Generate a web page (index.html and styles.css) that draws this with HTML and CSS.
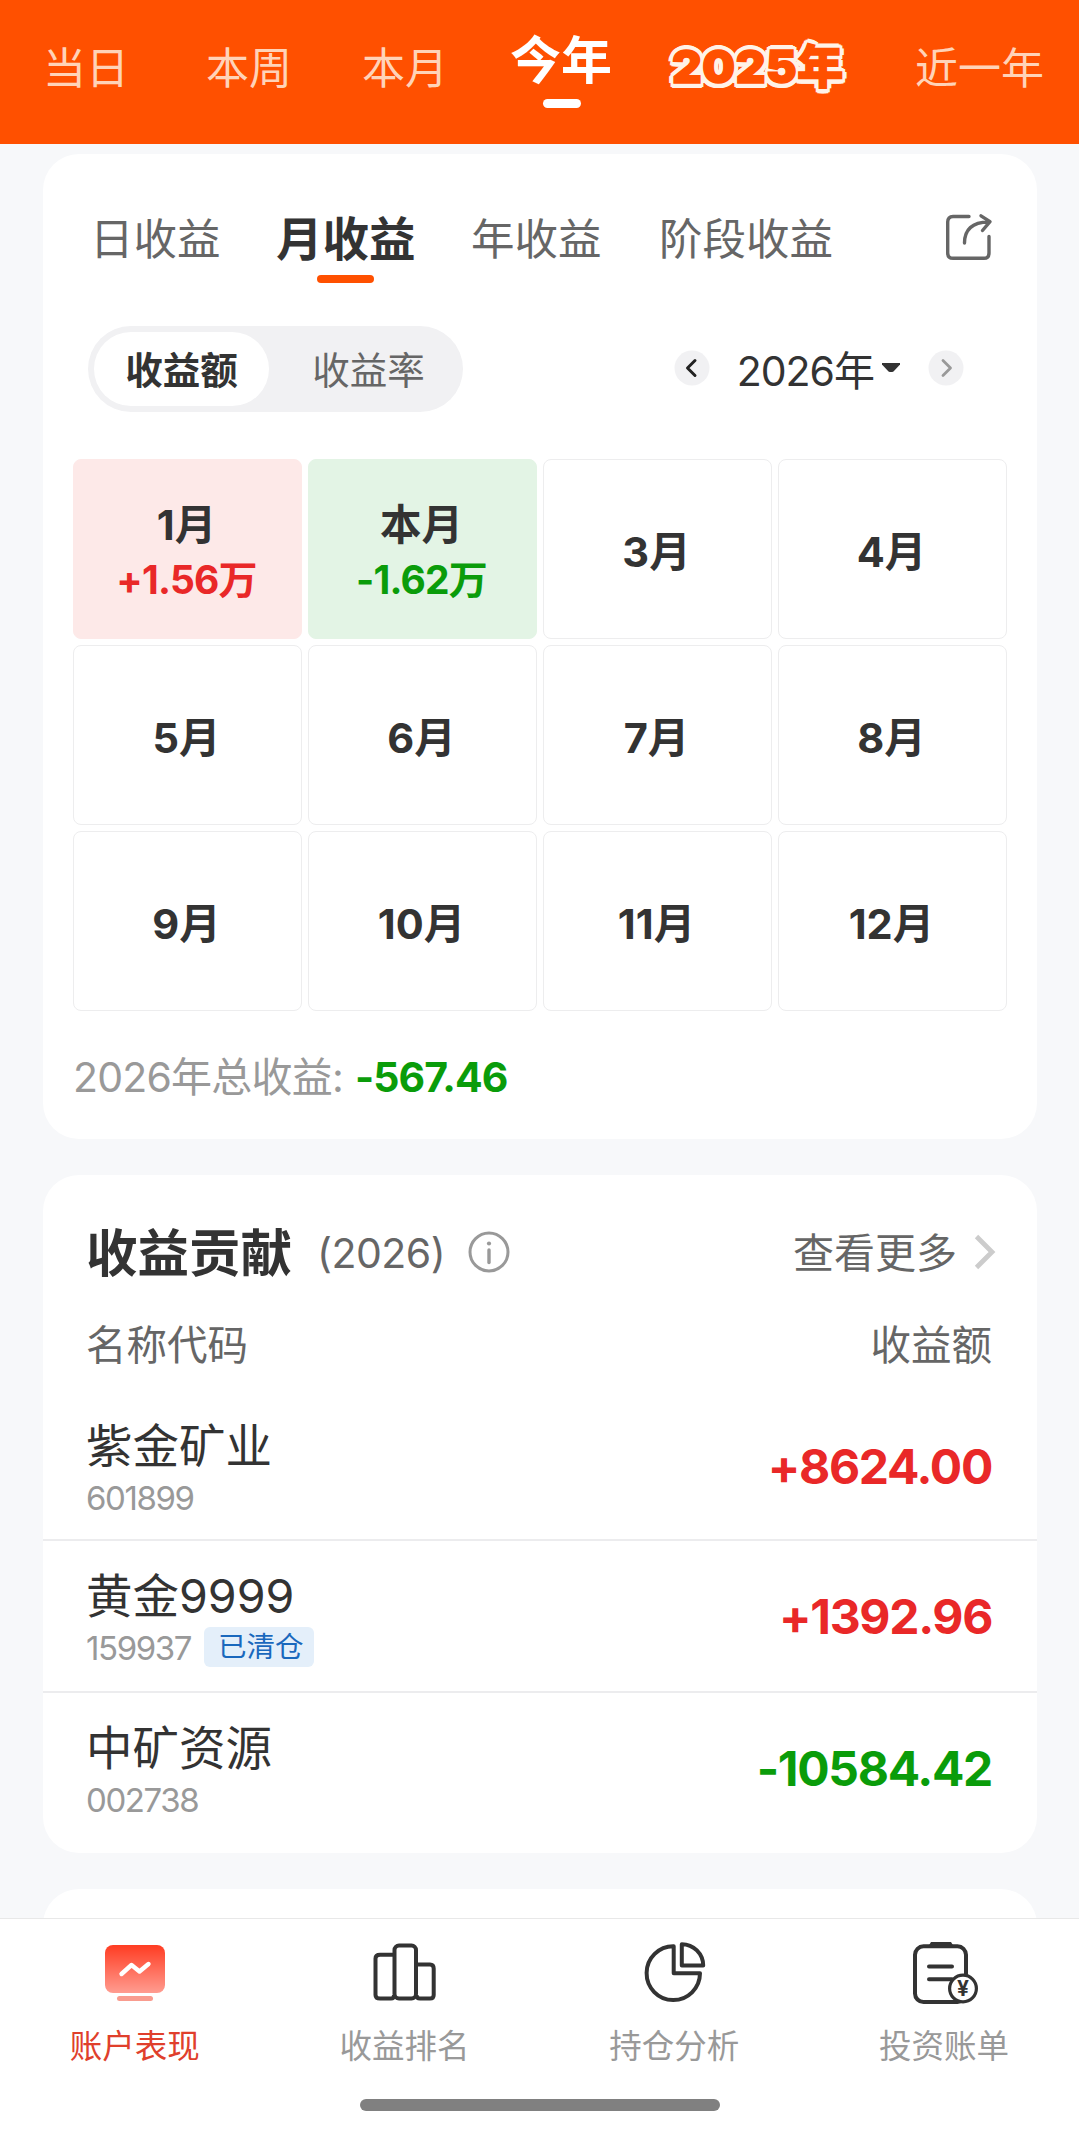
FILE: index.html
```html
<!DOCTYPE html>
<html lang="zh-CN">
<head>
    <meta charset="UTF-8">
    <meta name="viewport" content="width=device-width, initial-scale=1.0">
    <title>账户表现</title>
    <link rel="stylesheet" href="styles.css">
</head>
<body>
    <header class="period-bar">
        <span class="period">当日</span>
        <span class="period">本周</span>
        <span class="period">本月</span>
        <span class="period active">今年</span>
        <span class="period year-badge">2025年</span>
        <span class="period">近一年</span>
    </header>

    <main class="content">
        <section class="card calendar-card">
            <div class="tabs">
                <span class="tab">日收益</span>
                <span class="tab active">月收益</span>
                <span class="tab">年收益</span>
                <span class="tab">阶段收益</span>
                <svg class="share-icon" width="48" height="48" viewBox="0 0 48 48" fill="none" stroke="#666" stroke-width="3.4" stroke-linecap="round" stroke-linejoin="round">
                    <path d="M24 3.500H8Q2.700 3.500 2.700 9V40Q2.700 45.300 8 45.300H39Q44 45.300 44 40V23.500"/>
                    <path d="M19.500 30C19.500 17 27 9 43.500 9M36 2.800L45 8.700L37.500 17.500"/>
                </svg>
            </div>

            <div class="toolbar">
                <div class="switch">
                    <span class="switch-item active">收益额</span>
                    <span class="switch-item">收益率</span>
                </div>
                <div class="year-picker">
                    <svg width="36" height="36" viewBox="0 0 36 36" fill="none">
                        <circle cx="18" cy="18" r="17.500" fill="#f1f1f3"/>
                        <path d="M21 10.500L13.500 18L21 25.500" stroke="#222" stroke-width="3" stroke-linecap="round" stroke-linejoin="round"/>
                    </svg>
                    <span class="year">2026年</span>
                    <svg class="caret" width="20" height="10" viewBox="0 0 20 10">
                        <path d="M1 0H19V1.500L12.500 8.500Q10 9.500 7.500 8.500L1 1.500Z" fill="#333"/>
                    </svg>
                    <svg width="36" height="36" viewBox="0 0 36 36" fill="none">
                        <circle cx="18" cy="18" r="17.500" fill="#f1f1f3"/>
                        <path d="M15 10.500L22.500 18L15 25.500" stroke="#999" stroke-width="2.800" stroke-linecap="round" stroke-linejoin="round"/>
                    </svg>
                </div>
            </div>

            <div class="months">
                <div class="month up"><span>1月</span><span class="value">+1.56万</span></div>
                <div class="month down"><span>本月</span><span class="value">-1.62万</span></div>
                <div class="month">3月</div>
                <div class="month">4月</div>
                <div class="month">5月</div>
                <div class="month">6月</div>
                <div class="month">7月</div>
                <div class="month">8月</div>
                <div class="month">9月</div>
                <div class="month">10月</div>
                <div class="month">11月</div>
                <div class="month">12月</div>
            </div>

            <p class="total"><span class="total-label">2026年总收益:</span><b>-567.46</b></p>
        </section>

        <section class="card contribution">
            <div class="card-head">
                <h2>收益贡献</h2>
                <span class="head-year">(2026)</span>
                <svg width="44" height="44" viewBox="0 0 44 44" fill="none" stroke="#999" stroke-width="3">
                    <circle cx="22" cy="22" r="19"/>
                    <path d="M22 20V32.500" stroke-width="3.400" stroke-linecap="round"/>
                    <circle cx="22" cy="13.500" r="2.100" fill="#999" stroke="none"/>
                </svg>
                <span class="more">查看更多</span>
                <svg width="24" height="36" viewBox="0 0 24 36" fill="none" stroke="#ccc" stroke-width="4.800">
                    <path d="M3.500 2.500L19 18L3.500 33.500"/>
                </svg>
            </div>
            <div class="list-head"><span>名称代码</span><span>收益额</span></div>
            <div class="row">
                <div>
                    <div class="name">紫金矿业</div>
                    <div class="code">601899</div>
                </div>
                <span class="amount red">+8624.00</span>
            </div>
            <div class="row">
                <div>
                    <div class="name">黄金9999</div>
                    <div class="code">159937<span class="tag">已清仓</span></div>
                </div>
                <span class="amount red">+1392.96</span>
            </div>
            <div class="row">
                <div>
                    <div class="name">中矿资源</div>
                    <div class="code">002738</div>
                </div>
                <span class="amount green">-10584.42</span>
            </div>
        </section>

        <section class="card next-card"></section>
    </main>

    <footer class="bottom-bar">
        <nav class="nav">
            <div class="nav-item active">
                <svg width="72" height="72" viewBox="0 0 72 72" fill="none">
                    <defs>
                        <linearGradient id="screen" x1="0" y1="0" x2="0" y2="1">
                            <stop offset="0" stop-color="#ff3c22"/>
                            <stop offset="1" stop-color="#ff9c90"/>
                        </linearGradient>
                    </defs>
                    <rect x="6" y="8" width="60" height="48" rx="8" fill="url(#screen)"/>
                    <path d="M22.500 37L32.500 28L40.500 34.500L49.500 27" stroke="#fff" stroke-width="4.400" stroke-linecap="round" stroke-linejoin="round"/>
                    <rect x="18" y="59" width="36" height="5" rx="2.500" fill="#f99c8f"/>
                </svg>
                <span>账户表现</span>
            </div>
            <div class="nav-item">
                <svg width="72" height="72" viewBox="0 0 72 72" fill="none" stroke="#333" stroke-width="4">
                    <path d="M25 17.800H11Q6.500 17.800 6.500 21.500V58Q6.500 61.500 11 61.500H22Q25 61.500 25 58"/>
                    <rect x="25.500" y="8.500" width="21.500" height="53" rx="4.500"/>
                    <path d="M47.500 27.500H61Q64.700 27.500 64.700 31.500V58Q64.700 61.500 61 61.500H51Q47.500 61.500 47.500 58"/>
                </svg>
                <span>收益排名</span>
            </div>
            <div class="nav-item">
                <svg width="72" height="72" viewBox="0 0 72 72" fill="none" stroke="#333" stroke-width="4" stroke-linejoin="round">
                    <path d="M35.700 9.300A26.700 26.900 0 1 0 62 36.300H35.700Z"/>
                    <path d="M43.800 7.200V28.500H65.200A21.400 21.400 0 0 0 43.800 7.200Z"/>
                </svg>
                <span>持仓分析</span>
            </div>
            <div class="nav-item">
                <svg width="72" height="72" viewBox="0 0 72 72" fill="none" stroke="#333" stroke-width="4">
                    <rect x="7" y="9.300" width="51" height="55.700" rx="8.500"/>
                    <path d="M20.500 9L23 5H43L45.500 9Z" fill="#333" stroke="none"/>
                    <path d="M21 29.500H44M21 42.200H44" stroke-linecap="round"/>
                    <circle cx="55" cy="51.500" r="13.400" fill="#fff" stroke-width="3.200"/>
                    <text class="yen" x="55" y="59" text-anchor="middle">¥</text>
                </svg>
                <span>投资账单</span>
            </div>
        </nav>
        <div class="home-indicator"></div>
    </footer>
</body>
</html>
```
FILE: styles.css
```css
* {
    margin: 0;
    padding: 0;
    box-sizing: border-box;
}

body {
    height: 2131px;
    display: flex;
    flex-direction: column;
    overflow: hidden;
    background: #f7f8fa;
    color: #333;
    font-family: Inter, "Noto Sans CJK SC", sans-serif;
}

svg {
    display: block;
    flex: none;
}

/* top period bar */
.period-bar {
    flex: none;
    height: 144px;
    padding-left: 43px;
    display: grid;
    grid-template-columns: 163px 156px 148px 162px 243px auto;
    background: #ff5000;
}

.period {
    padding-top: 39px;
    font-size: 43px;
    line-height: 58px;
    color: #ffd3b8;
    white-space: nowrap;
}

.period.active {
    padding-top: 32px;
    font-size: 51px;
    font-weight: 700;
    color: #fff;
}

.period.active::after {
    content: "";
    display: block;
    width: 38px;
    height: 9px;
    margin: 9px 0 0 33px;
    border-radius: 5px;
    background: #fff;
}

.period.year-badge {
    padding-top: 37px;
    font-size: 46px;
    font-weight: 900;
    letter-spacing: 0.6px;
    color: #ff5000;
    -webkit-text-stroke: 1.5px #ff5000;
    text-shadow: 5px 0 #fff3e8, -5px 0 #fff3e8, 0 5px #fff3e8, 0 -5px #fff3e8,
        3.5px 3.5px #fff3e8, -3.5px 3.5px #fff3e8, 3.5px -3.5px #fff3e8, -3.5px -3.5px #fff3e8,
        2px 4.5px #fff3e8, -2px 4.5px #fff3e8, 2px -4.5px #fff3e8, -2px -4.5px #fff3e8;
}

.content {
    flex: 1;
    min-height: 0;
    overflow: hidden;
    padding: 10px 42px 0 43px;
}

.card {
    margin-bottom: 36px;
    border-radius: 36px;
    background: #fff;
}

.calendar-card {
    height: 985px;
    padding: 55px 30px 0;
}

.tabs {
    display: grid;
    grid-template-columns: 186px 195px 188px auto 62px;
    padding-left: 17px;
    height: 117px;
}

.tab {
    font-size: 43.5px;
    line-height: 60px;
    color: #666;
}

.tab.active {
    font-size: 46.5px;
    font-weight: 700;
    color: #333;
}

.tab.active::after {
    content: "";
    display: block;
    width: 57px;
    height: 8px;
    margin: 6px 0 0 41px;
    border-radius: 4px;
    background: #ff5000;
}

.share-icon {
    margin-top: 4px;
}

.toolbar {
    display: flex;
    justify-content: space-between;
    padding: 0 43px 0 15px;
}

.switch {
    display: flex;
    width: 375px;
    height: 86px;
    padding: 6px;
    border-radius: 43px;
    background: #f1f1f3;
}

.switch-item {
    flex: none;
    width: 175px;
    margin-right: 12px;
    border-radius: 37px;
    font-size: 37.5px;
    line-height: 78px;
    text-align: center;
    color: #666;
}

.switch-item.active {
    background: #fff;
    font-weight: 700;
    color: #333;
}

.year-picker {
    display: flex;
    align-items: center;
    height: 84px;
}

.year {
    margin-left: 27px;
    font-size: 41px;
    letter-spacing: -1px;
}

.caret {
    margin: 0 27px 0 7px;
}

.months {
    display: grid;
    grid-template-columns: repeat(4, 229px);
    grid-auto-rows: 180px;
    gap: 6px;
    margin-top: 47px;
}

.month {
    display: flex;
    flex-direction: column;
    align-items: center;
    justify-content: center;
    padding: 5px 2px 0 0;
    border: 1px solid #ededee;
    border-radius: 8px;
    font-size: 41.5px;
    font-weight: 700;
    line-height: 56px;
}

.month .value {
    font-size: 39px;
    line-height: 54px;
    letter-spacing: -0.8px;
}

.month.up {
    border-color: #fde9e8;
    background: #fde9e8;
}

.month.down {
    border-color: #e3f4e5;
    background: #e3f4e5;
}

.up .value,
.red {
    color: #e92828;
}

.down .value,
.green {
    color: #0a9c0a;
}

.total {
    display: flex;
    margin-top: 36px;
    font-size: 41px;
    line-height: 60px;
    color: #999;
}

.total-label {
    width: 282px;
    white-space: nowrap;
    letter-spacing: -0.8px;
}

.total b {
    color: #0a9c0a;
    letter-spacing: -0.9px;
}

/* contribution list */
.contribution {
    height: 678px;
    padding-top: 42px;
}

.card-head {
    display: flex;
    align-items: center;
    height: 70px;
    padding: 0 40px 0 43px;
}

.card-head h2 {
    width: 231px;
    padding-top: 1px;
    font-size: 51.5px;
    font-weight: 700;
    line-height: 70px;
}

.head-year {
    width: 150px;
    padding-top: 1px;
    font-size: 41px;
    letter-spacing: -0.5px;
    color: #666;
}

.more {
    margin-left: auto;
    margin-right: 16px;
    padding-top: 1px;
    font-size: 41px;
    line-height: 58px;
    color: #666;
}

.list-head {
    display: flex;
    justify-content: space-between;
    padding: 30px 45px 0 43px;
    font-size: 40.5px;
    line-height: 58px;
    color: #666;
}

.row {
    display: flex;
    justify-content: space-between;
    height: 152px;
    padding: 23px 45px 0 43px;
    border-bottom: 2px solid #ececee;
}

.list-head + .row {
    height: 166px;
    padding-top: 39px;
}

.row:last-child {
    border-bottom: none;
}

.name {
    font-size: 46.5px;
    line-height: 64px;
}

.code {
    display: flex;
    align-items: center;
    height: 40px;
    font-size: 33px;
    letter-spacing: -1.4px;
    color: #999;
}

.tag {
    height: 40px;
    margin: -2px 0 0 13px;
    padding: 0 10px 0 14px;
    border-radius: 6px;
    background: #e4effa;
    font-size: 28.5px;
    line-height: 39px;
    letter-spacing: 0;
    color: #1a68bd;
}

.amount {
    padding-top: 21px;
    font-size: 48px;
    font-weight: 700;
    line-height: 64px;
    letter-spacing: -1.3px;
}

.next-card {
    height: 200px;
}

/* bottom navigation */
.bottom-bar {
    flex: none;
    height: 213px;
    border-top: 1px solid #e8e8e8;
    background: #fff;
}

.nav {
    display: flex;
    padding-top: 18px;
}

.nav-item {
    flex: 1;
    display: flex;
    flex-direction: column;
    align-items: center;
    font-size: 32.5px;
    line-height: 44px;
    color: #999;
}

.nav-item span {
    margin-top: 16px;
}

.nav-item.active {
    color: #e03f2c;
}

.yen {
    font-size: 21px;
    font-weight: 700;
    fill: #333;
    stroke: none;
}

.home-indicator {
    width: 360px;
    height: 12px;
    margin: 30px auto 0;
    border-radius: 6px;
    background: #808080;
}
```
